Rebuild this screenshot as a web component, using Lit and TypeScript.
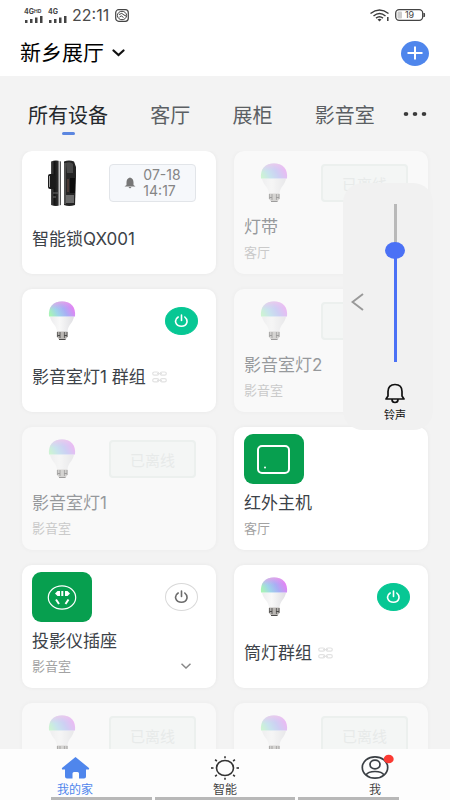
import { LitElement, html, svg, css, nothing } from "lit";
import { customElement, property, state } from "lit/decorators.js";
import { classMap } from "lit/directives/class-map.js";

type Kind = "lock" | "bulb" | "remote" | "socket";
interface Device {
  name?: string;
  room?: string;
  kind: Kind;
  offline?: boolean;
  power?: "on" | "off";
  group?: boolean;
  alert?: [string, string];
  expandable?: boolean;
}

const devices: Device[] = [
  { name: "智能锁QX001", kind: "lock", alert: ["07-18", "14:17"] },
  { name: "灯带", room: "客厅", kind: "bulb", offline: true },
  { name: "影音室灯1 群组", kind: "bulb", power: "on", group: true },
  { name: "影音室灯2", room: "影音室", kind: "bulb", offline: true },
  { name: "影音室灯1", room: "影音室", kind: "bulb", offline: true },
  { name: "红外主机", room: "客厅", kind: "remote" },
  { name: "投影仪插座", room: "影音室", kind: "socket", power: "off", expandable: true },
  { name: "筒灯群组", kind: "bulb", power: "on", group: true },
  { kind: "bulb", offline: true },
  { kind: "bulb", offline: true },
];

const bulb = html`<svg width="28" height="40" viewBox="0 0 28 40" aria-hidden="true">
  <defs>
    <linearGradient id="hue" x1="0" y1="0.7" x2="1" y2="0.4">
      <stop offset="0" stop-color="#a8f3b6" />
      <stop offset="0.28" stop-color="#9fd4ea" />
      <stop offset="0.58" stop-color="#a9aef4" />
      <stop offset="1" stop-color="#ee7cf4" />
    </linearGradient>
    <linearGradient id="blush" x1="0.3" y1="0" x2="0.5" y2="1">
      <stop offset="0" stop-color="#f3a6e0" stop-opacity="0.8" />
      <stop offset="0.5" stop-color="#d8a0f5" stop-opacity="0" />
    </linearGradient>
    <linearGradient id="shell" x1="0" y1="0" x2="1" y2="0">
      <stop offset="0" stop-color="#ececee" />
      <stop offset="0.4" stop-color="#f8f8f8" />
      <stop offset="1" stop-color="#dfdfe3" />
    </linearGradient>
  </defs>
  <path d="M2 15.500H26C25 22 20 24 19.500 30.500H9C8.500 24 3 22 2 15.500Z" fill="url(#shell)" />
  <path d="M1 15.500C0 6 5 0.500 14 0.500S28 6 27 15.500Z" fill="url(#hue)" />
  <path d="M1 15.500C0 6 5 0.500 14 0.500S28 6 27 15.500Z" fill="url(#blush)" />
  <path d="M9 30.500H19.500V36L17 39H11.500L9 36Z" fill="#b9b6b3" />
  <path d="M9.500 31V36M12 31V37M16.500 31V37M19 31V36" stroke="#6b6967" stroke-width="1.200" />
  <path d="M9.500 34.500H12M16 34.500H19M11 38.500H17.500" stroke="#4b4a49" stroke-width="1.200" />
</svg>`;

const lock = html`<svg width="32" height="48" viewBox="0 0 32 48" aria-hidden="true">
  <defs>
    <linearGradient id="steel" x1="0" x2="1">
      <stop offset="0" stop-color="#4a4a4a" />
      <stop offset="0.35" stop-color="#151515" />
      <stop offset="0.65" stop-color="#2b2b2b" />
      <stop offset="0.85" stop-color="#c4c4c4" />
      <stop offset="1" stop-color="#222" />
    </linearGradient>
  </defs>
  <path d="M5 2.500Q10 0.500 15 2.500V46Q10 48 5 46Z" fill="url(#steel)" />
  <rect x="2" y="15" width="7" height="15" rx="2" fill="#1b1b1b" />
  <path d="M3.500 17V28" stroke="#a5a5a5" />
  <path d="M7 34H12M7 38H10" stroke="#6a6a6a" />
  <path d="M18 2.500Q23 0.500 28 2.500L30 8V18L29 46Q23 48 18 46Z" fill="#242424" />
  <path d="M20 4Q24 2 27 5V14H21Z" fill="#484848" />
  <path d="M24 19H29V34H24Z" fill="#0c0c0c" />
  <path d="M22 20V33" stroke="#6b4a43" />
  <path d="M20 36H28V44H20Z" fill="#6a6a6a" />
  <path d="M19 4V45" stroke="#7b7b7b" />
</svg>`;

const remote = html`<svg width="60" height="50" viewBox="0 0 60 50" fill="none" aria-hidden="true">
  <rect x="14" y="12" width="31" height="27" rx="4" stroke="#fff" stroke-width="2" />
  <circle cx="21" cy="33.500" r="1" fill="#fff" />
</svg>`;

const socket = html`<svg width="60" height="50" viewBox="0 0 60 50" fill="none" stroke="#fff" aria-hidden="true">
  <ellipse cx="30" cy="25.500" rx="13.700" ry="11.700" stroke-width="1.200" />
  <path d="M30.300 19V24M24 27.500L27 32M36.500 27.500L33.500 32" stroke-width="2" />
  <path d="M28 19V24H25.500L23 21.500L25.500 19ZM33 19V24H35.500L38 21.500L35.500 19Z" fill="#fff" stroke="none" />
</svg>`;

const powerIcon = html`<svg width="15" height="14" viewBox="0 0 15 14" fill="none" stroke="currentColor" stroke-width="1.600" stroke-linecap="round" aria-hidden="true">
  <path d="M4.200 3C-0.500 6 1.500 12.300 7.500 12.300S14.500 6 10.800 3M7.500 1V6.500" />
</svg>`;

const linkIcon = html`<svg width="15" height="12" viewBox="0 0 15 12" fill="none" stroke="#e2e2e2" stroke-width="1.200" aria-hidden="true">
  <rect x="0.700" y="1" width="6" height="3.200" rx="1.600" /><rect x="8.300" y="1" width="6" height="3.200" rx="1.600" />
  <rect x="0.700" y="7.700" width="6" height="3.200" rx="1.600" /><rect x="8.300" y="7.700" width="6" height="3.200" rx="1.600" />
  <path d="M5 2.600H10M5 9.300H10" />
</svg>`;

const art = { lock, bulb, remote, socket };

const baseText = css`
  :host {
    font-family: Inter, "Noto Sans CJK SC", sans-serif;
    color: #3c4248;
  }
  * {
    box-sizing: border-box;
  }
  button {
    font: inherit;
    color: inherit;
    background: none;
    border: 0;
    padding: 0;
    margin: 0;
  }
  svg {
    display: block;
    flex: none;
  }
`;

@customElement("device-card")
class DeviceCard extends LitElement {
  @property({ attribute: false }) device!: Device;

  static styles = [
    baseText,
    css`
      :host {
        display: block;
      }
      .card {
        height: 100%;
        min-height: 123px;
        padding: 7px 10px 4px;
        border-radius: 10px;
        background: #fff;
        box-shadow: 0 0 4px rgba(0, 0, 0, 0.05);
      }
      .offline {
        opacity: 0.5;
      }
      .top {
        display: flex;
        align-items: center;
        justify-content: space-between;
        height: 50px;
      }
      .art {
        display: grid;
        place-items: center;
        width: 60px;
        height: 50px;
        border-radius: 9px;
      }
      .green {
        background: #079f4f;
      }
      .tag {
        display: flex;
        align-items: center;
        justify-content: center;
        gap: 7px;
        width: 87px;
        height: 38px;
        margin-right: 10px;
        border: 1px solid #e2e5e9;
        border-radius: 4px;
        background: #f6f8fb;
        color: #858585;
        font-size: 14px;
      }
      .time {
        display: block;
        line-height: 16px;
      }
      .off-tag {
        background: #f5f9f8;
        border-color: #e6eeeb;
        border-width: 2px;
        color: #dde3e1;
        font-size: 15px;
      }
      .power {
        display: grid;
        place-items: center;
        width: 33px;
        height: 28px;
        margin-right: 8px;
        border-radius: 50%;
        border: 1px solid #d9d9d9;
        color: #6c6c6c;
      }
      .on {
        background: #07c794;
        border-color: #07c794;
        color: #fff;
      }
      .body {
        display: flex;
        flex-direction: column;
        justify-content: center;
        min-height: 62px;
      }
      .name {
        display: flex;
        align-items: center;
        gap: 6px;
        margin: 0;
        font-size: 17px;
        line-height: 26px;
        font-weight: 400;
        white-space: nowrap;
      }
      .room {
        display: flex;
        align-items: center;
        justify-content: space-between;
        padding-right: 15px;
        font-size: 13px;
        line-height: 24px;
        color: #a2a2a2;
      }
    `,
  ];

  render() {
    const d = this.device;
    return html`<article class=${classMap({ card: true, offline: !!d.offline })}>
      <div class="top">
        <div class=${classMap({ art: true, green: d.kind === "remote" || d.kind === "socket" })}>${art[d.kind]}</div>
        ${d.alert
          ? html`<div class="tag">
              <svg width="12" height="12" viewBox="0 0 12 12" fill="#777" aria-hidden="true">
                <path d="M6 0.500C3.500 1 2.500 3 2.500 5.500V8L0.500 9.500H11.500L9.500 8V5.500C9.500 3 8.500 1 6 0.500ZM4.500 10H7.500L6 11.500Z" />
              </svg>
              <div>${d.alert.map((t) => html`<span class="time">${t}</span>`)}</div>
            </div>`
          : nothing}
        ${d.offline ? html`<div class="tag off-tag">已离线</div>` : nothing}
        ${d.power
          ? html`<button class=${classMap({ power: true, on: d.power === "on" })} aria-label="电源">${powerIcon}</button>`
          : nothing}
      </div>
      <div class="body">
        ${d.name ? html`<h2 class="name">${d.name}${d.group ? linkIcon : nothing}</h2>` : nothing}
        ${d.room
          ? html`<div class="room">
              <span>${d.room}</span>
              ${d.expandable
                ? html`<button aria-label="展开">
                    <svg width="10" height="6" viewBox="0 0 10 6" fill="none" stroke="#888" stroke-width="1.500">
                      <path d="M0.500 0.700L5 5L9.500 0.700" />
                    </svg>
                  </button>`
                : nothing}
            </div>`
          : nothing}
      </div>
    </article>`;
  }
}

@customElement("volume-panel")
class VolumePanel extends LitElement {
  static styles = [
    baseText,
    css`
      :host {
        display: grid;
        grid-template-columns: 28px 1fr;
        align-items: center;
        width: 90px;
        padding: 21px 14px 6px 0;
        border-radius: 20px;
        background: #f1f1f1;
      }
      .back {
        display: grid;
        place-items: center;
        height: 36px;
        margin-bottom: 24px;
      }
      .level {
        display: flex;
        flex-direction: column;
        align-items: center;
      }
      .slider {
        appearance: none;
        writing-mode: vertical-lr;
        direction: rtl;
        width: 20px;
        height: 158px;
        margin: 0;
        background: linear-gradient(#b9b9b9 30%, #4b71f5 30%) center / 3px 100% no-repeat;
      }
      .slider::-webkit-slider-thumb {
        appearance: none;
        width: 20px;
        height: 17px;
        border-radius: 50%;
        background: #4b71f5;
      }
      .bell {
        margin-top: 21px;
      }
      .label {
        margin-top: 2px;
        font-size: 11px;
        line-height: 18px;
        color: #111;
        white-space: nowrap;
      }
    `,
  ];

  render() {
    return html`<button class="back" aria-label="展开">
        <svg width="13" height="18" viewBox="0 0 13 18" fill="none" stroke="#999" stroke-width="2">
          <path d="M12 1L1.500 9L12 17" />
        </svg>
      </button>
      <div class="level">
        <input class="slider" id="ring" type="range" min="0" max="100" value="73" />
        <svg class="bell" width="20" height="21" viewBox="0 0 20 21" fill="none" stroke="#111" stroke-width="1.700" stroke-linejoin="round" aria-hidden="true">
          <path d="M3 13V8.500C3 4 5.500 1.500 10 1.500S17 4 17 8.500V13L19 16H1L3 13ZM7 16.500C7 20.500 13 20.500 13 16.500" />
        </svg>
        <label class="label" for="ring">铃声</label>
      </div>`;
  }
}

@customElement("app-root")
class AppRoot extends LitElement {
  @state() private tab = 0;

  static styles = [
    baseText,
    css`
      :host {
        display: flex;
        flex-direction: column;
        position: relative;
        height: 100vh;
        overflow: hidden;
        background: #f3f3f3;
      }
      .head {
        flex: none;
        background: #fff;
      }
      .status {
        display: flex;
        align-items: center;
        gap: 5px;
        height: 30px;
        padding: 0 24px;
      }
      .clock {
        flex: 1;
        display: flex;
        align-items: center;
        gap: 6px;
        font-size: 16px;
        line-height: 20px;
        color: #4a4a4a;
      }
      .signal {
        display: flex;
        flex-direction: column;
        gap: 1px;
        font-size: 7px;
        line-height: 7px;
        font-weight: 700;
        color: #444;
      }
      .hd {
        font-size: 5px;
        vertical-align: 1px;
        line-height: 5px;
      }
      .titlebar {
        display: flex;
        align-items: center;
        justify-content: space-between;
        height: 46px;
        padding: 0 21px 0 20px;
      }
      .home {
        display: flex;
        align-items: center;
        gap: 8px;
        font-size: 21px;
        line-height: 30px;
        color: #000;
      }
      .add {
        display: grid;
        place-items: center;
        width: 28px;
        height: 25px;
        border-radius: 50%;
        background: #4f86ec;
      }
      .tabs {
        flex: none;
        display: flex;
        align-items: center;
        justify-content: space-between;
        height: 75px;
        padding: 0 23px 0 28px;
      }
      .tab {
        display: flex;
        flex-direction: column;
        align-items: center;
        gap: 1px;
        padding-top: 8px;
        font-size: 20px;
        line-height: 30px;
        color: #5b5f63;
        white-space: nowrap;
      }
      .tab::after {
        content: "";
        width: 13px;
        height: 3px;
        border-radius: 2px;
      }
      .current {
        color: #25282c;
      }
      .current::after {
        background: #5b86e0;
      }
      .more {
        margin-left: -14px;
      }
      .grid {
        flex: 1;
        min-height: 0;
        overflow: hidden;
        display: grid;
        grid-template-columns: 1fr 1fr;
        grid-auto-rows: max-content;
        gap: 15px 18px;
        padding: 0 22px;
      }
      .volume {
        position: absolute;
        top: 183px;
        right: 17px;
      }
      .nav {
        flex: none;
        display: grid;
        grid-template-columns: repeat(3, 1fr);
        padding-top: 7px;
        background: #fdfdfd;
      }
      .item {
        display: flex;
        flex-direction: column;
        align-items: center;
        gap: 3px;
        font-size: 12px;
        line-height: 14px;
        color: #444;
        text-decoration: none;
      }
      .active {
        color: #4f86ec;
      }
      .gestures {
        flex: none;
        display: grid;
        grid-template-columns: 101fr 141fr 101fr;
        gap: 3px;
        height: 3px;
        padding: 0 51px;
        background: #fdfdfd;
      }
      .bar {
        background: #b8b8b8;
      }
    `,
  ];

  private signal(label: string, hd: boolean) {
    return html`<div class="signal">
      <span>${label}${hd ? html`<span class="hd">HD</span>` : nothing}</span>
      <svg width="19" height="7" viewBox="0 0 19 7" fill="#444" aria-hidden="true">
        <path d="M1 4H3.500V7H1ZM6 3H8.500V7H6ZM11 1.500H13.500V7H11ZM16 0H18.500V7H16Z" />
      </svg>
    </div>`;
  }

  render() {
    const tabs = ["所有设备", "客厅", "展柜", "影音室"];
    const rays = [0, 45, 90, 135, 180, 225, 270, 315];
    return html`
      <header class="head">
        <div class="status">
          ${this.signal("4G", true)} ${this.signal("4G", false)}
          <div class="clock">
            <span>22:11</span>
            <svg width="14" height="13" viewBox="0 0 14 13" fill="none" stroke="#444" aria-hidden="true">
              <rect x="0.700" y="0.700" width="12.600" height="11.600" rx="3" stroke-width="1.200" />
              <ellipse cx="7" cy="6.500" rx="4.600" ry="4.200" />
              <path d="M4 5.500Q7 3 9 6L11 7M4.500 8Q6 5.500 8.500 8.500" />
            </svg>
          </div>
          <svg width="20" height="13" viewBox="0 0 20 13" fill="none" stroke="#3c3c3c" stroke-width="1.500" aria-hidden="true">
            <path d="M0.500 4.500Q9.500-2.500 18.500 4.500M3.500 7Q9.500 2 15.500 7M6 9.200Q9.500 6.500 13 9.200" />
            <path d="M7.500 10.500Q9.500 9 11.500 10.500L9.500 12.500Z" fill="#3c3c3c" stroke="none" />
            <path d="M17.800 8V12" />
          </svg>
          <svg width="31" height="12" viewBox="0 0 31 12" aria-hidden="true">
            <rect x="0.700" y="0.700" width="27" height="10.600" rx="3.500" fill="none" stroke="#444" stroke-width="1.300" />
            <path d="M29 4Q30.500 6 29 8Z" fill="#444" stroke="#444" />
            <rect x="2.500" y="2.500" width="4.500" height="7" rx="1" fill="#ccc" />
            <text x="14.500" y="9" text-anchor="middle" font-size="9" fill="#444">19</text>
          </svg>
        </div>
        <div class="titlebar">
          <button class="home">
            新乡展厅
            <svg width="13" height="8" viewBox="0 0 13 8" fill="none" stroke="#111" stroke-width="2.200" stroke-linecap="round" aria-hidden="true">
              <path d="M1.500 1.500L6.500 6L11.500 1.500" />
            </svg>
          </button>
          <button class="add" aria-label="添加">
            <svg width="16" height="14" viewBox="0 0 16 14" stroke="#fff" stroke-width="2" aria-hidden="true">
              <path d="M0.500 7H15.500M8 0.500V13.500" />
            </svg>
          </button>
        </div>
      </header>
      <div class="tabs">
        ${tabs.map(
          (t, i) => html`<button class=${classMap({ tab: true, current: this.tab === i })} @click=${() => (this.tab = i)}>${t}</button>`
        )}
        <button class="more" aria-label="更多">
          <svg width="24" height="6" viewBox="0 0 24 6" fill="#3a3a3a">
            <ellipse cx="3" cy="3" rx="2.300" ry="2" /><ellipse cx="12" cy="3" rx="2.300" ry="2" /><ellipse cx="21" cy="3" rx="2.300" ry="2" />
          </svg>
        </button>
      </div>
      <main class="grid">${devices.map((d) => html`<device-card .device=${d}></device-card>`)}</main>
      <nav class="nav">
        <a class="item active" href="#home">
          <svg width="29" height="24" viewBox="0 0 29 24" fill="#4f86ec" aria-hidden="true">
            <path d="M14.500 1L28 12Q28.500 13.500 27 13.500H25V20.500Q25 22.500 23 22.500H18V17.500Q18 16 16.500 16H13Q11.500 16 11.500 17.500V22.500H6Q4 22.500 4 20.500V13.500H2Q0.500 13.500 1 12Z" />
          </svg>
          我的家
        </a>
        <a class="item" href="#smart">
          <svg width="30" height="24" viewBox="0 0 30 24" fill="none" stroke="#333" stroke-width="1.600" aria-hidden="true">
            <ellipse cx="15" cy="12" rx="8.500" ry="7.500" />
            ${rays.map((a) => {
              const c = Math.cos((a * Math.PI) / 180);
              const s = Math.sin((a * Math.PI) / 180);
              return svg`<path d="M${15 + c * 11.5} ${12 + s * 9.7}L${15 + c * 14} ${12 + s * 11.8}" />`;
            })}
          </svg>
          智能
        </a>
        <a class="item" href="#me">
          <svg width="32" height="24" viewBox="0 0 32 24" fill="none" stroke="#3a3f44" stroke-width="1.700" overflow="visible" aria-hidden="true">
            <ellipse cx="16" cy="11.500" rx="12.700" ry="10.700" />
            <ellipse cx="16" cy="8.500" rx="5" ry="4.300" />
            <path d="M7 19Q9 15.500 16 15.500T25 19" />
            <ellipse cx="29.700" cy="3" rx="5" ry="4.300" fill="#fb3a33" stroke="none" />
          </svg>
          我
        </a>
      </nav>
      <div class="gestures"><div class="bar"></div><div class="bar"></div><div class="bar"></div></div>
      <volume-panel class="volume"></volume-panel>
    `;
  }
}
